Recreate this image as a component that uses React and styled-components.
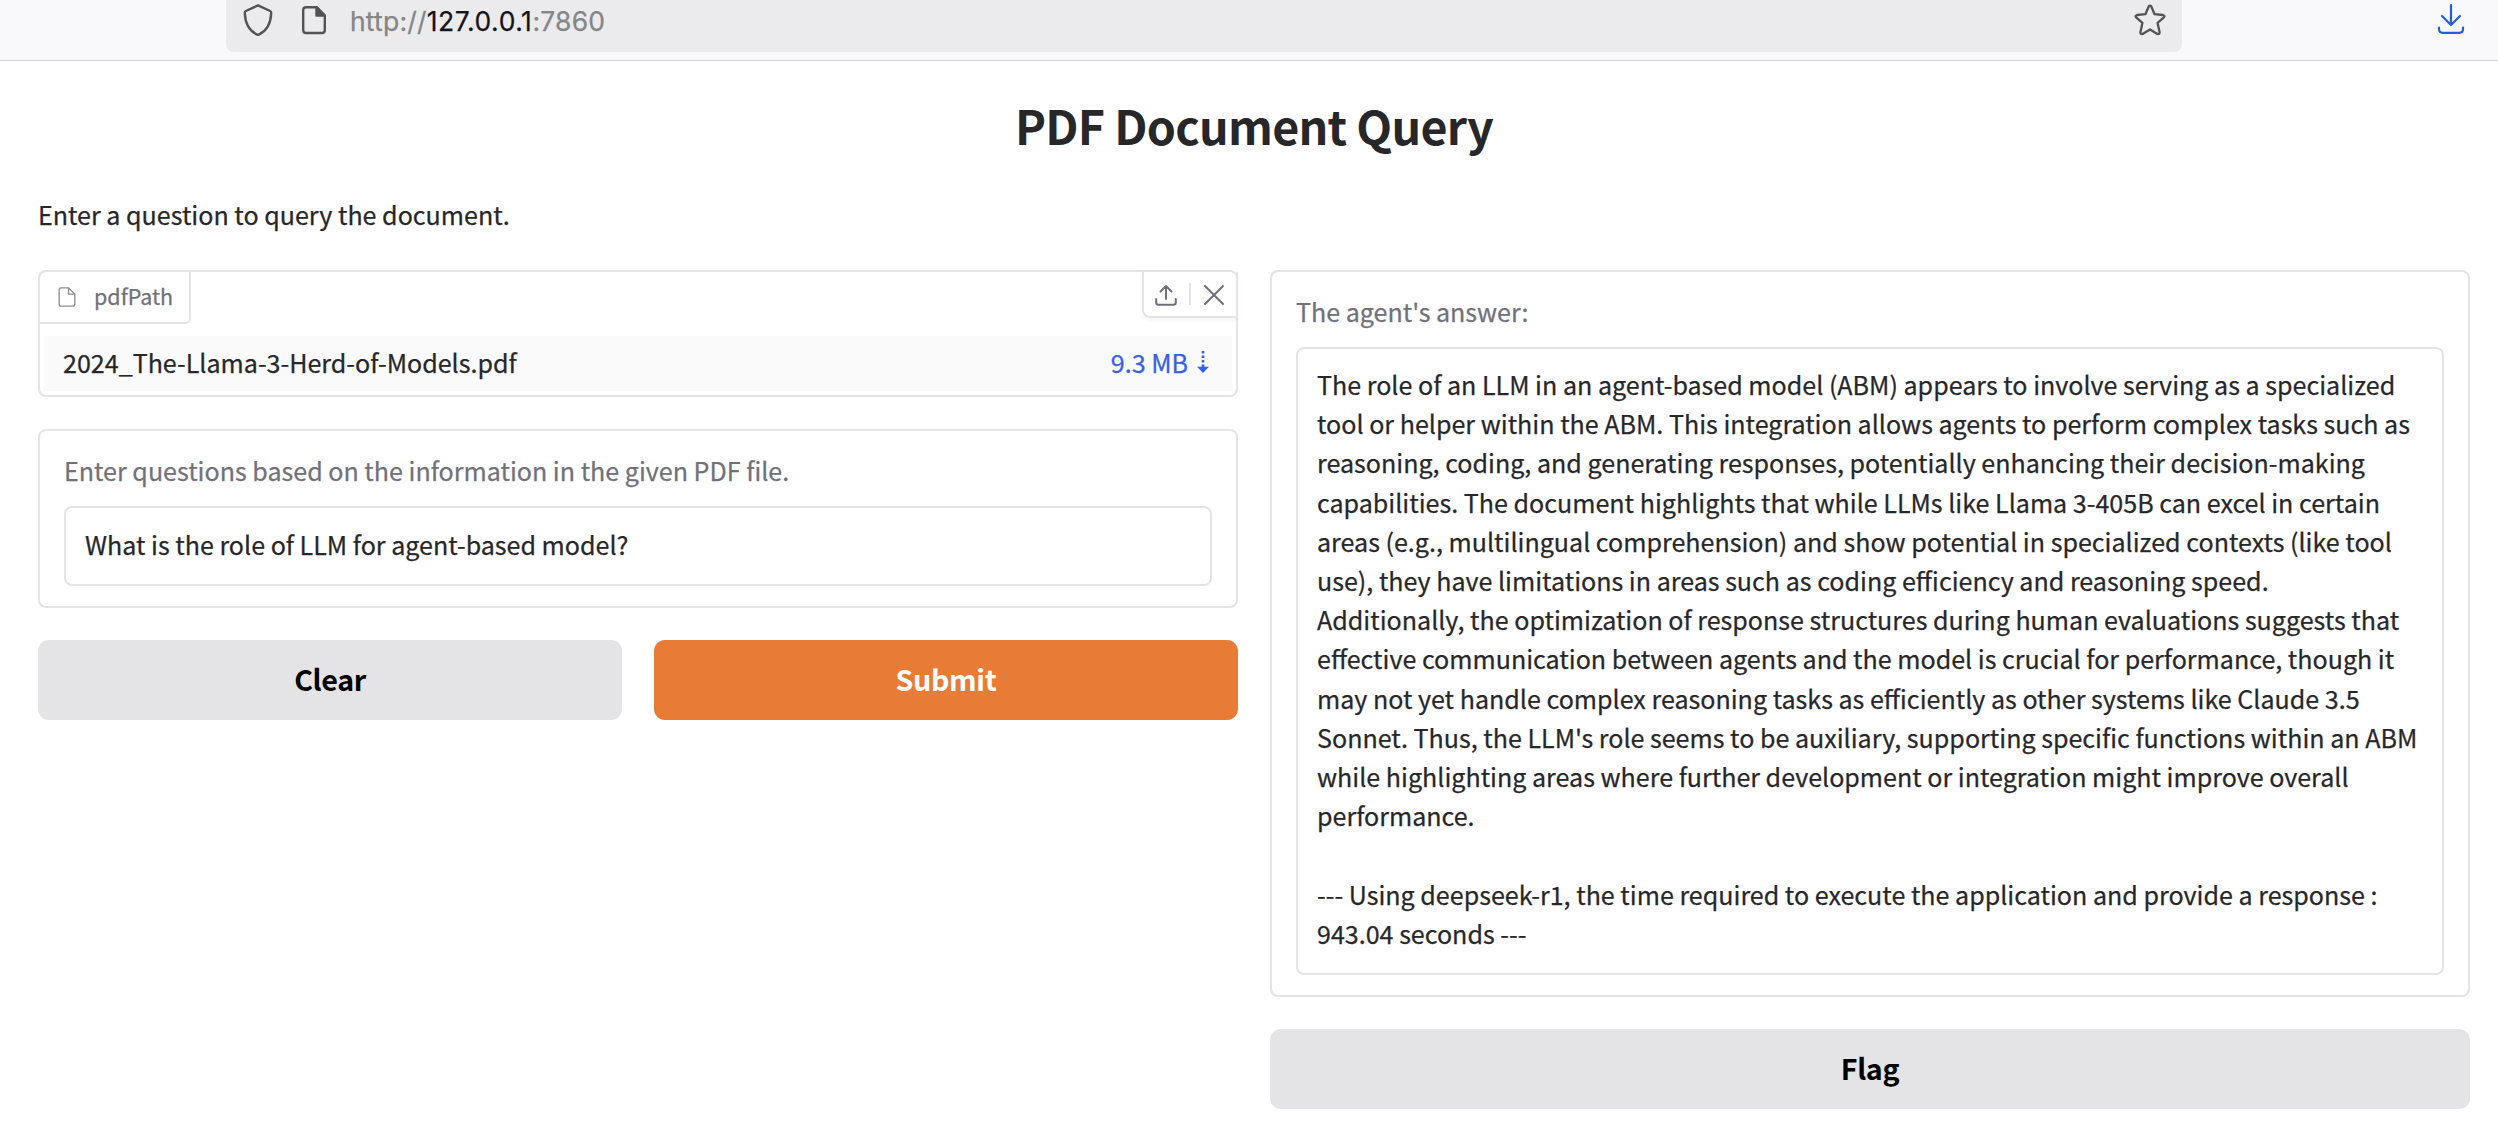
import React from "react";
import styled, { createGlobalStyle } from "styled-components";

const GlobalStyle = createGlobalStyle`
  * { box-sizing: border-box; }
  body {
    margin: 0;
    background: #fff;
    color: #27272a;
    font-family: "Noto Sans CJK SC", "Noto Sans", sans-serif;
    font-size: 25.07px;
    line-height: 39.2px;
    -webkit-text-stroke: 0.25px currentColor;
  }
`;

const line = "#e4e4e5";

const Toolbar = styled.header`
  display: flex;
  align-items: flex-start;
  justify-content: space-between;
  height: 61px;
  padding: 0 33px 0 226px;
  background: #f9f9fb;
  border-bottom: 1px solid #d5d5d8;
`;

const AddressBar = styled.div`
  display: flex;
  align-items: flex-start;
  width: 1956px;
  height: 52px;
  padding: 3px 16px 0 17px;
  background: #ebebed;
  border-radius: 0 0 8px 8px;
`;

const Glyph = styled.svg`
  display: block;
  flex: none;
  width: ${(p) => p.$w}px;
  height: ${(p) => p.$h}px;
  margin-left: ${(p) => p.$ml || 0}px;
  margin-top: ${(p) => p.$mt || 0}px;
  fill: none;
  stroke: ${(p) => p.$color};
  stroke-width: ${(p) => p.$sw || 2}px;
  stroke-linecap: round;
  stroke-linejoin: round;
`;

const Url = styled.div`
  flex: 1;
  margin-left: 23px;
  font: 400 26.5px/36px Inter, sans-serif;
  letter-spacing: 0.2px;
  color: #858587;
  white-space: nowrap;
`;

const Host = styled.span`
  color: #15141a;
  letter-spacing: 0.55px;
`;

const Page = styled.main`
  padding: 0 28px 0 38px;
`;

const Title = styled.h1`
  margin: 0;
  padding-top: 30px;
  height: 125px;
  font-size: 46.6px;
  line-height: 68px;
  font-weight: 600;
  letter-spacing: -0.73px;
  text-align: center;
  -webkit-text-stroke: 0;
`;

const Description = styled.p`
  margin: 0;
  padding-top: 9px;
  height: 84px;
`;

const Columns = styled.div`
  display: grid;
  grid-template-columns: 1200px 1200px;
  gap: 32px;
  align-items: start;
`;

const Column = styled.section`
  display: flex;
  flex-direction: column;
  gap: 32px;
`;

const Panel = styled.div`
  border: 2px solid ${line};
  border-radius: 8px;
  height: ${(p) => p.$h}px;
  padding: ${(p) => p.$pad || "0"};
`;

const FileHead = styled.div`
  display: flex;
  justify-content: space-between;
  align-items: flex-start;
  height: 64px;
`;

const FileLabel = styled.div`
  display: flex;
  width: 151px;
  height: 52px;
  padding: 15px 0 0 18px;
  border: solid ${line};
  border-width: 0 2px 2px 0;
  border-bottom-right-radius: 6px;
  color: #71717a;
`;

const FileLabelText = styled.span`
  margin: -1px 0 0 18px;
  font-size: 21.5px;
  line-height: 20px;
`;

const FileActions = styled.div`
  display: flex;
  width: 96px;
  height: 46px;
  margin-right: -2px;
  padding: 12px 0 0 11px;
  border: solid ${line};
  border-width: 0 2px 2px 2px;
  border-bottom-left-radius: 8px;
  box-shadow: 0 2px 4px rgba(0, 0, 0, 0.05);
`;

const Divider = styled.i`
  width: 2px;
  height: 22px;
  margin: -1px 0 0 12px;
  background: ${line};
`;

const FileRow = styled.div`
  display: flex;
  align-items: flex-start;
  height: 55px;
  margin: 0 4px;
  padding: 7px 23px 0 19px;
  background: #fafafa;
`;

const FileName = styled.span`
  flex: 1;
`;

const FileSize = styled.a`
  color: #3660e4;
`;

const FieldLabel = styled.div`
  height: ${(p) => p.$h}px;
  color: #71717a;
`;

const Field = styled.div`
  height: ${(p) => p.$h}px;
  padding: ${(p) => p.$top}px 19px 0;
  border: 2px solid ${line};
  border-radius: 8px;
  white-space: pre-wrap;
`;

const ButtonRow = styled.div`
  display: grid;
  grid-template-columns: 1fr 1fr;
  gap: 32px;
`;

const Button = styled.button`
  height: 80px;
  padding: 0 0 2px;
  border: 0;
  border-radius: 11px;
  background: ${(p) => (p.$primary ? "#e87c36" : "#e4e4e6")};
  color: ${(p) => (p.$primary ? "#fff" : "#000")};
  font: 600 28.65px/40px "Noto Sans CJK SC", "Noto Sans", sans-serif;
  letter-spacing: -0.35px;
  -webkit-text-stroke: 0;
`;

const answer =
  "The role of an LLM in an agent-based model (ABM) appears to involve serving as a specialized tool or helper within the ABM. This integration allows agents to perform complex tasks such as reasoning, coding, and generating responses, potentially enhancing their decision-making capabilities. The document highlights that while LLMs like Llama 3-405B can excel in certain areas (e.g., multilingual comprehension) and show potential in specialized contexts (like tool use), they have limitations in areas such as coding efficiency and reasoning speed.\nAdditionally, the optimization of response structures during human evaluations suggests that effective communication between agents and the model is crucial for performance, though it may not yet handle complex reasoning tasks as efficiently as other systems like Claude 3.5 Sonnet. Thus, the LLM's role seems to be auxiliary, supporting specific functions within an ABM while highlighting areas where further development or integration might improve overall performance.\n\n--- Using deepseek-r1, the time required to execute the application and provide a response : 943.04 seconds ---";

export default function App() {
  return (
    <>
      <GlobalStyle />
      <Toolbar>
        <AddressBar>
          <Glyph $w={30} $h={34} $color="#535355" $sw={2.4} viewBox="0 0 30 34">
            <path d="M15 2.4 L27.2 8 Q28.3 8.6 28.2 10 C27.8 21 23.5 28 15.8 31.6 Q15 32 14.2 31.6 C6.5 28 2.2 21 1.8 10 Q1.7 8.6 2.8 8 Z" />
          </Glyph>
          <Glyph $w={26} $h={30} $ml={28} $mt={2} $color="#535355" $sw={2.4} viewBox="0 0 26 30">
            <path d="M5 2.2 H15.5 L23.8 10.5 V25 Q23.8 28 21 28 H5 Q2.2 28 2.2 25 V5 Q2.2 2.2 5 2.2 Z" />
            <path d="M15.5 2.2 V10.5 H23.8 Z" fill="#535355" />
          </Glyph>
          <Url>
            http://<Host>127.0.0.1</Host>:7860
          </Url>
          <Glyph $w={32} $h={32} $mt={1} $color="#535355" $sw={2.3} viewBox="0 0 32 32">
            <path d="M14.7 2.5 Q16 .8 17.3 2.5 L20.6 10.2 L29 11 Q31.3 11.6 29.9 13.4 L23.6 18.9 L25.6 28.2 Q25.6 30.6 23.4 29.9 L16 25.4 L8.6 29.9 Q6.4 30.6 6.4 28.2 L8.4 18.9 L2.1 13.4 Q.7 11.6 3 11 L11.4 10.2 Z" />
          </Glyph>
        </AddressBar>
        <Glyph $w={28} $h={32} $mt={3} $color="#245edb" $sw={2.2} viewBox="0 0 28 32">
          <path d="M14 2 V22 M5 13 L14 22 L23 13 M2 24.5 V26 Q2 29.8 5.8 29.8 H22.2 Q26 29.8 26 26 V24.5" />
        </Glyph>
      </Toolbar>
      <Page>
        <Title>PDF Document Query</Title>
        <Description>Enter a question to query the document.</Description>
        <Columns>
          <Column>
            <Panel $h={127}>
              <FileHead>
                <FileLabel>
                  <Glyph $w={18} $h={20} $color="#8b8b92" $sw={1.3} viewBox="0 0 18 20">
                    <path d="M3 .8 H10.5 L16.8 7.1 V17.2 Q16.8 19.2 14.8 19.2 H3 Q1.2 19.2 1.2 17.2 V2.8 Q1.2 .8 3 .8 Z M10.5 .8 V7.1 H16.8" />
                  </Glyph>
                  <FileLabelText>pdfPath</FileLabelText>
                </FileLabel>
                <FileActions>
                  <Glyph $w={22} $h={22} $color="#6f6f79" viewBox="0 0 22 22">
                    <path d="M11 15 V2 M5.5 7.5 L11 2 L16.5 7.5 M1.2 15 V18.5 Q1.2 20.8 3.5 20.8 H18.5 Q20.8 20.8 20.8 18.5 V15" />
                  </Glyph>
                  <Divider />
                  <Glyph $w={22} $h={22} $ml={12} $color="#6f6f79" viewBox="0 0 22 22">
                    <path d="M2 2 L20 20 M20 2 L2 20" />
                  </Glyph>
                </FileActions>
              </FileHead>
              <FileRow>
                <FileName>2024_The-Llama-3-Herd-of-Models.pdf</FileName>
                <FileSize>9.3 MB</FileSize>
                <Glyph $w={12} $h={22} $ml={9} $mt={8} $color="none" viewBox="0 0 12 22">
                  <path
                    fill="#3660e4"
                    d="M4.7 0h2.6v2.6H4.7z M4.7 4.5h2.6v2.6H4.7z M4.7 9h2.6v2.6H4.7z M4.7 13.5h2.6v2.2h4.7L6 22L0 15.7h4.7z"
                  />
                </Glyph>
              </FileRow>
            </Panel>
            <Panel $h={179} $pad="20px 24px">
              <FieldLabel $h={55}>
                Enter questions based on the information in the given PDF file.
              </FieldLabel>
              <Field $h={80} $top={17}>
                What is the role of LLM for agent-based model?
              </Field>
            </Panel>
            <ButtonRow>
              <Button>Clear</Button>
              <Button $primary>Submit</Button>
            </ButtonRow>
          </Column>
          <Column>
            <Panel $h={727} $pad="20px 24px">
              <FieldLabel $h={55}>The agent's answer:</FieldLabel>
              <Field $h={628} $top={16}>
                {answer}
              </Field>
            </Panel>
            <Button>Flag</Button>
          </Column>
        </Columns>
      </Page>
    </>
  );
}
